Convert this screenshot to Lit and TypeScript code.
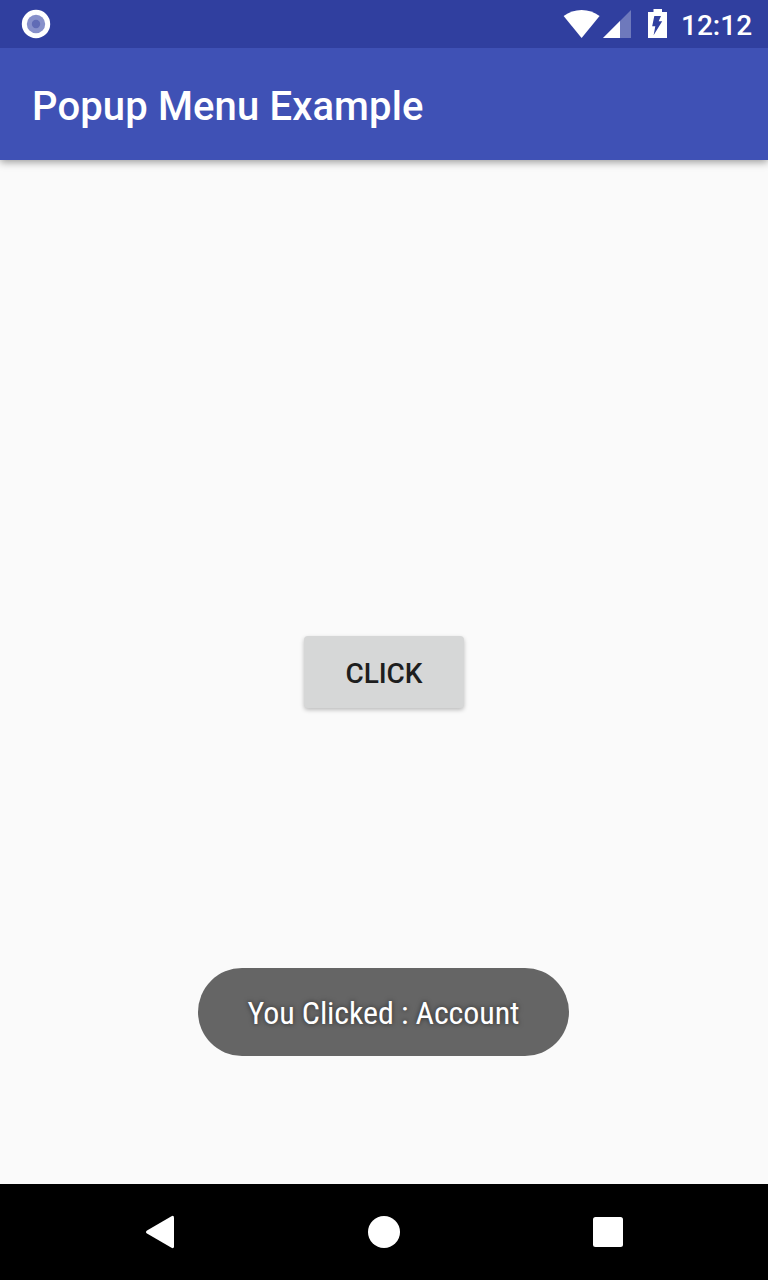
import { LitElement, html, css } from "lit";
import { customElement } from "lit/decorators.js";

@customElement("app-root")
export class AppRoot extends LitElement {
  static styles = css`
    :host {
      display: flex;
      flex-direction: column;
      position: relative;
      width: 768px;
      height: 1280px;
      overflow: hidden;
      background: #fafafa;
      font-family: Roboto, "Liberation Sans", sans-serif;
    }
    svg {
      display: block;
      flex: none;
    }
    .status {
      display: flex;
      justify-content: space-between;
      height: 48px;
      background: #303f9f;
      color: #fff;
    }
    .right {
      display: flex;
    }
    .clock {
      width: 87px;
      font-size: 28px;
      font-weight: 500;
      line-height: 52px;
      white-space: nowrap;
    }
    .appbar {
      display: flex;
      align-items: center;
      box-sizing: border-box;
      height: 112px;
      padding: 6px 32px 0;
      background: #3f51b5;
      color: #fff;
      box-shadow: 0 2px 8px rgba(0, 0, 0, 0.4);
      clip-path: inset(0 0 -16px 0);
      z-index: 1;
    }
    h1 {
      margin: 0;
      font-size: 40px;
      font-weight: 500;
      line-height: 48px;
      letter-spacing: 0.13px;
      white-space: nowrap;
    }
    main {
      flex: 1;
      display: flex;
      align-items: center;
      justify-content: center;
    }
    button {
      width: 160px;
      height: 72px;
      padding: 4px 0 0;
      border: 0;
      border-radius: 4px;
      background: #d6d7d7;
      color: #1e1e1e;
      font: 500 28px/34px Roboto, "Liberation Sans", sans-serif;
      letter-spacing: -0.1px;
      box-shadow: 0 2px 4px rgba(0, 0, 0, 0.25);
    }
    .toast {
      position: absolute;
      left: 198px;
      top: 968px;
      display: flex;
      align-items: center;
      justify-content: center;
      box-sizing: border-box;
      width: 371px;
      height: 88px;
      padding-top: 2px;
      border-radius: 44px;
      background: #656565;
      color: #fff;
      font-family: "Roboto Condensed", Roboto, sans-serif;
      font-stretch: condensed;
      font-size: 32px;
      letter-spacing: -0.1px;
      white-space: nowrap;
      text-shadow: 0 0 5px rgba(0, 0, 0, 0.6);
    }
    nav {
      height: 96px;
      background: #000;
    }
  `;

  render() {
    return html`
      <header class="status">
        <svg width="72" height="48" viewBox="0 0 72 48">
          <circle cx="36" cy="24" r="14.2" fill="#fff" />
          <circle cx="36" cy="24" r="9.2" fill="#8790ca" />
          <circle cx="36" cy="24" r="4.2" fill="#606bb5" />
        </svg>
        <div class="right">
          <svg width="121" height="48" viewBox="560 0 121 48">
            <path fill="#fff" d="M581.6 38 563.6 16Q571.6 10 581.6 10T599.6 16Z" />
            <path fill="#fff" fill-opacity="0.3" d="M603 38 631 10V38Z" />
            <path fill="#fff" d="M603 38 620 21V38Z" />
            <path
              fill="#fff"
              fill-rule="evenodd"
              d="M653.5 9H662V12H667V38H648V12H653.5ZM654.3 16H661L658.7 21.3H662.2L653.6 35.3L655.3 26.2H652.2Z"
            />
          </svg>
          <div class="clock">12:12</div>
        </div>
      </header>
      <div class="appbar"><h1>Popup Menu Example</h1></div>
      <main><button>CLICK</button></main>
      <nav>
        <svg width="768" height="96" viewBox="0 0 768 96" fill="#fff">
          <path d="M147 46.4 171.5 32.2Q174 31 174 33.8V62.2Q174 65 171.5 63.8L147 49.6Q145 48 147 46.4Z" />
          <circle cx="384" cy="48" r="16" />
          <rect x="593" y="33" width="30" height="30" rx="2.5" />
        </svg>
      </nav>
      <div class="toast"><span>You Clicked : Account</span></div>
    `;
  }
}
